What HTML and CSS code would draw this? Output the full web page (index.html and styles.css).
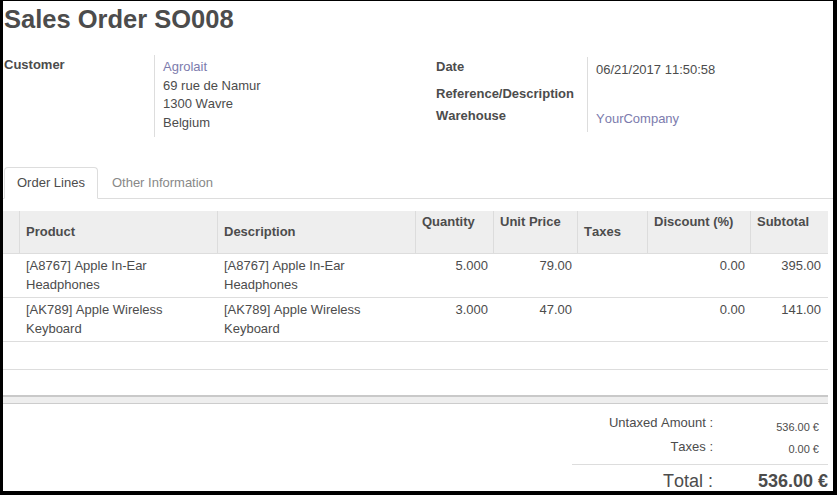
FILE: index.html
```html
<!DOCTYPE html>
<html>
<head>
<meta charset="utf-8">
<link rel="stylesheet" href="styles.css">
</head>
<body>
<div class="sheet">
  <h1 class="title">Sales Order SO008</h1>
  <div class="groups">
    <div class="group-left">
      <div class="lbl lbl-customer">Customer</div>
      <div class="val val-customer">
        <div class="link">Agrolait</div>
        <div>69 rue de Namur</div>
        <div>1300 Wavre</div>
        <div>Belgium</div>
      </div>
    </div>
    <div class="group-right">
      <div class="rrow rrow-date">
        <div class="lbl">Date</div>
        <div class="val val-date">06/21/2017 11:50:58</div>
      </div>
      <div class="rrow rrow-ref">
        <div class="lbl">Reference/Description</div>
        <div class="val"></div>
      </div>
      <div class="rrow rrow-wh">
        <div class="lbl">Warehouse</div>
        <div class="val val-wh"><span class="link">YourCompany</span></div>
      </div>
    </div>
  </div>

  <div class="tabs">
    <div class="tab tab-active">Order Lines</div>
    <div class="tab tab-inactive">Other Information</div>
  </div>

  <div class="lines">
    <div class="grid thead">
      <div class="th th-handle"></div>
      <div class="th th-mid">Product</div>
      <div class="th th-mid">Description</div>
      <div class="th th-top">Quantity</div>
      <div class="th th-top">Unit Price</div>
      <div class="th th-mid">Taxes</div>
      <div class="th th-top">Discount (%)</div>
      <div class="th th-top">Subtotal</div>
    </div>
    <div class="grid trow">
      <div class="td"></div>
      <div class="td">[A8767] Apple In-Ear Headphones</div>
      <div class="td">[A8767] Apple In-Ear Headphones</div>
      <div class="td num">5.000</div>
      <div class="td num">79.00</div>
      <div class="td"></div>
      <div class="td num">0.00</div>
      <div class="td num num-last">395.00</div>
    </div>
    <div class="grid trow">
      <div class="td"></div>
      <div class="td">[AK789] Apple Wireless Keyboard</div>
      <div class="td">[AK789] Apple Wireless Keyboard</div>
      <div class="td num">3.000</div>
      <div class="td num">47.00</div>
      <div class="td"></div>
      <div class="td num">0.00</div>
      <div class="td num num-last">141.00</div>
    </div>
    <div class="empty-row"></div>
    <div class="spacer-row"></div>
    <div class="tfoot"></div>
  </div>

  <div class="totals-wrap">
    <div class="totals">
      <div class="trow-sum sum1">
        <div class="sum-label">Untaxed Amount :</div>
        <div class="sum-val sum-val1">536.00 €</div>
      </div>
      <div class="trow-sum sum2">
        <div class="sum-label">Taxes :</div>
        <div class="sum-val sum-val2">0.00 €</div>
      </div>
      <div class="sum-sep"></div>
      <div class="trow-sum sum-total">
        <div class="total-label">Total :</div>
        <div class="total-val">536.00 €</div>
      </div>
    </div>
  </div>
</div>
</body>
</html>
```

FILE: styles.css
```css
html, body {
  margin: 0;
  padding: 0;
}
body {
  background: #000;
  padding: 1px 4px 4px 3px;
}
.sheet {
  background: #fff;
  width: 830px;
  height: 490px;
  overflow: hidden;
  font-family: "Liberation Sans", Arial, sans-serif;
  font-size: 13px;
  line-height: 18.5px;
  color: #4c4c4c;
  font-kerning: none;
}
.title {
  margin: 0;
  padding: 3px 0 0 1px;
  height: 30px;
  font-size: 25.5px;
  line-height: 30px;
  font-weight: bold;
  color: #4c4c4c;
}
.groups {
  display: flex;
  margin-top: 21px;
  align-items: flex-start;
}
.group-left {
  width: 433px;
  display: grid;
  grid-template-columns: 151px 1fr;
}
.lbl {
  font-weight: bold;
}
.lbl-customer {
  padding: 1px 0 0 1px;
}
.val {
  border-left: 1px solid #ddd;
  padding-left: 8px;
}
.val-customer {
  padding-top: 3px;
  height: 79px;
}
.link {
  color: #7c7bad;
}
.group-right {
  flex: 1;
  margin-top: 2px;
}
.rrow {
  display: grid;
  grid-template-columns: 151px 1fr;
}
.rrow-date { height: 28px; }
.rrow-date .lbl { padding-top: 1px; }
.val-date { padding-top: 4px; }
.rrow-ref { height: 22px; }
.rrow-wh { height: 25px; }
.val-wh { padding-top: 3px; }

.tabs {
  display: flex;
  margin-top: 30px;
  padding-left: 1px;
  border-bottom: 1px solid #ddd;
}
.tab {
  padding: 5px 12px 6px;
  line-height: 19px;
  border: 1px solid transparent;
  border-radius: 4px 4px 0 0;
  margin-bottom: -1px;
  margin-right: 1px;
}
.tab-active {
  border-color: #ddd;
  border-bottom-color: transparent;
  background: #fff;
  color: #4c4c4c;
}
.tab-inactive {
  color: #888;
}

.lines {
  margin-top: 12px;
  width: 825px;
}
.grid {
  display: grid;
  grid-template-columns: 16px 198px 198px 78px 84px 70px 103px 78px;
}
.thead {
  background: #eee;
  height: 42px;
  border-bottom: 1px solid #ddd;
  font-weight: bold;
}
.th {
  border-left: 1px solid #dcdcdc;
  padding-left: 6px;
  display: flex;
}
.th-handle {
  border-left: none;
  padding: 0;
}
.th-mid {
  align-items: center;
}
.th-top {
  align-items: flex-start;
  padding-top: 2px;
}
.trow {
  height: 43px;
  border-bottom: 1px solid #ddd;
}
.td {
  padding: 3px 5px 0 7px;
}
.num {
  text-align: right;
}
.num-last {
  padding-right: 7px;
}
.empty-row {
  height: 27px;
  border-bottom: 1px solid #ddd;
}
.spacer-row {
  height: 25px;
}
.tfoot {
  border-top: 2px solid #c9c9c9;
  height: 6px;
  background: #eee;
  border-bottom: 1px solid #ccc;
}

.totals-wrap {
  display: flex;
  justify-content: flex-end;
  padding-right: 5px;
}
.totals {
  width: 256px;
  padding-top: 10px;
}
.trow-sum {
  display: grid;
  grid-template-columns: 141px 115px;
}
.sum1 { height: 24px; }
.sum2 { height: 26px; }
.sum-label {
  text-align: right;
  font-size: 13px;
}
.sum-val {
  text-align: right;
  font-size: 11px;
  padding-right: 9px;
}
.sum-val1 { padding-top: 4px; }
.sum-val2 { padding-top: 2px; }
.sum-sep {
  height: 1px;
  background: #ddd;
}
.sum-total {
  margin-top: 4px;
  line-height: 24px;
  font-size: 18px;
}
.total-label {
  text-align: right;
}
.total-val {
  text-align: right;
  font-weight: bold;
  padding-right: 0;
}
```
